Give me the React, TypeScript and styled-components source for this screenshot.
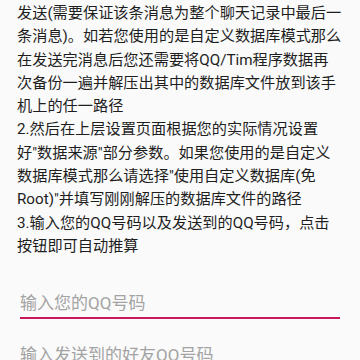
import styled, { createGlobalStyle } from "styled-components";

const GlobalStyle = createGlobalStyle`
  html, body {
    margin: 0;
    padding: 0;
    background: #fafafa;
  }
  body {
    font-family: Roboto, "Noto Sans CJK SC", sans-serif;
  }
`;

const lines = [
  "发送(需要保证该条消息为整个聊天记录中最后一",
  "条消息)。如若您使用的是自定义数据库模式那么",
  "在发送完消息后您还需要将QQ/Tim程序数据再",
  "次备份一遍并解压出其中的数据库文件放到该手",
  "机上的任一路径",
  "2.然后在上层设置页面根据您的实际情况设置",
  '好"数据来源"部分参数。如果您使用的是自定义',
  '数据库模式那么请选择"使用自定义数据库(免',
  'Root)"并填写刚刚解压的数据库文件的路径',
  "3.输入您的QQ号码以及发送到的QQ号码，点击",
  "按钮即可自动推算",
];

export default function App() {
  return (
    <>
      <GlobalStyle />
      <Page>
        <Instructions>
          {lines.map((line, i) => (
            <Line key={i}>{line}</Line>
          ))}
        </Instructions>
        <Field $focused>
          <Input placeholder="输入您的QQ号码" />
        </Field>
        <Field>
          <Input placeholder="输入发送到的好友QQ号码" />
        </Field>
      </Page>
    </>
  );
}

const Page = styled.main`
  width: 360px;
  height: 360px;
  overflow: hidden;
  display: flex;
  flex-direction: column;
  background: #fafafa;
`;

const Instructions = styled.section`
  padding: 2px 16px 0 17px;
  color: #1e1e1e;
  font-size: 15.2px;
  line-height: 23.3px;
`;

const Line = styled.div`
  white-space: nowrap;
`;

const Field = styled.div<{ $focused?: boolean }>`
  margin: ${(p) => (p.$focused ? "33px" : "24px")} 20px 0 20px;
  border-bottom: 2px solid ${(p) => (p.$focused ? "#c8195c" : "#bdbdbd")};
  flex-shrink: 0;
`;

const Input = styled.input`
  display: block;
  width: 100%;
  box-sizing: border-box;
  border: none;
  outline: none;
  background: transparent;
  padding: 0 0 2px 0;
  height: 26px;
  font-family: Roboto, "Noto Sans CJK SC", sans-serif;
  font-size: 17px;
  line-height: 24px;
  color: #222;

  &::placeholder {
    color: #a3a3a3;
  }
`;
